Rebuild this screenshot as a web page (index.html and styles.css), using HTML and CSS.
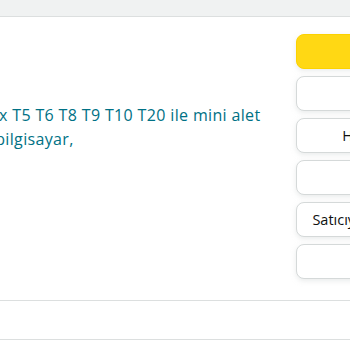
FILE: index.html
```html
<!DOCTYPE html>
<html lang="tr">
<head>
<meta charset="utf-8">
<link rel="stylesheet" href="styles.css">
</head>
<body>
<div class="page">
  <div class="topbar"></div>
  <div class="main">
    <div class="desc">
      <p class="title">Torx T5 T6 T8 T9 T10 T20 ile mini alet<br>ve bilgisayar,</p>
    </div>
    <div class="actions">
      <div class="btn btn-primary">Sepete Ekle</div>
      <div class="btn">Şimdi Al</div>
      <div class="btn">Hediye olarak gönderin</div>
      <div class="btn">Listeye Ekle</div>
      <div class="btn">Satıcıya soru sorun ve bilgi alınız</div>
      <div class="btn">Paylaş</div>
    </div>
  </div>
  <div class="strip"></div>
</div>
</body>
</html>
```
FILE: styles.css
```css
html, body {
  margin: 0;
  padding: 0;
  background: #ffffff;
}
.page {
  width: 350px;
  height: 350px;
  overflow: hidden;
  font-family: "Open Sans", "Noto Sans", sans-serif;
}
.topbar {
  height: 16px;
  background: #f0f2f2;
  border-bottom: 1px solid #dcdfdf;
}
.main {
  display: flex;
  padding-top: 17px;
  height: 266px;
}
.desc {
  flex: 0 0 323px;
  margin-left: -27px;
  padding-top: 69px;
}
.title {
  margin: 0;
  font-size: 16px;
  line-height: 24px;
  letter-spacing: 0.35px;
  color: #007185;
  white-space: nowrap;
}
.actions {
  flex: 0 0 250px;
  display: flex;
  flex-direction: column;
  gap: 7px;
}
.btn {
  height: 33px;
  border: 1px solid #d5d9d9;
  border-radius: 8px;
  background: #ffffff;
  box-shadow: 0 2px 5px rgba(213, 217, 217, 0.5);
  font-size: 14.5px;
  line-height: 33px;
  text-align: center;
  color: #0f1111;
  white-space: nowrap;
}
.btn-primary {
  background: #ffd814;
  border-color: #fcd200;
}
.strip {
  height: 38px;
  border-top: 1px solid #dcdfdf;
  border-bottom: 1px solid #dcdfdf;
}
```
